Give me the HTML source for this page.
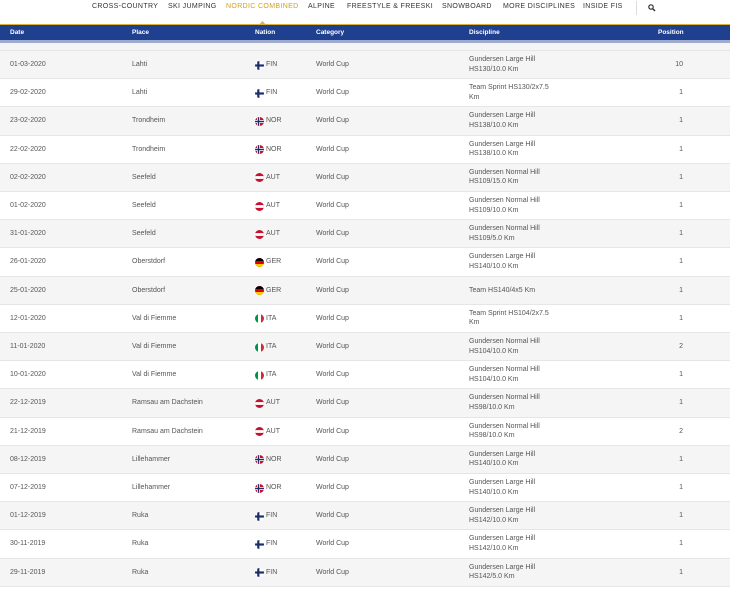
<!DOCTYPE html>
<html><head><meta charset="utf-8"><style>
*{margin:0;padding:0;box-sizing:border-box}
body{width:730px;height:596px;background:#fff;font-family:"Liberation Sans",Arial,sans-serif;position:relative;overflow:hidden;color:#444}
.nav{position:absolute;top:0;left:0;width:730px;height:24px;background:#fff}
.nav span{position:absolute;top:3px;font-size:7px;letter-spacing:0.35px;color:#333;white-space:nowrap}
.gold{position:absolute;top:24px;left:0;width:730px;height:1px;background:#d9b13b}
.blue{position:absolute;top:25px;left:0;width:730px;height:16px;background:#1f3f8f}
.strip{position:absolute;top:40px;left:0;width:730px;height:3px;background:#9eabcf}
.blue span{position:absolute;top:4px;font-size:6.5px;font-weight:bold;color:#fff}
.pre{position:absolute;top:43px;left:0;width:730px;height:8px;background:#f5f5f5;border-bottom:1px solid #e6e6e6}
.row{position:absolute;left:0;width:730px;height:28.2px;border-bottom:1px solid #e6e6e6;font-size:7px;color:#555}
.row.g{background:#f5f5f5}
.row>span{position:absolute;top:10px;white-space:nowrap}
.row .d{top:4px;line-height:9.5px}
.fl{position:absolute;top:9.5px;left:255px;width:9px;height:9px;border-radius:50%;overflow:hidden}
.fl svg{display:block}
.nt{left:266px}
</style></head><body>
<div class="nav">
<span style="left:92px">CROSS-COUNTRY</span>
<span style="left:168px">SKI JUMPING</span>
<span style="left:226px;color:#d4a017">NORDIC COMBINED</span>
<span style="left:308px">ALPINE</span>
<span style="left:347px">FREESTYLE &amp; FREESKI</span>
<span style="left:442px">SNOWBOARD</span>
<span style="left:503px">MORE DISCIPLINES</span>
<span style="left:583px">INSIDE FIS</span>
<div style="position:absolute;left:636px;top:1px;width:1px;height:14px;background:#ddd"></div>
<svg style="position:absolute;left:648px;top:4px" width="8" height="8" viewBox="0 0 8 8"><circle cx="3" cy="3" r="2.2" fill="none" stroke="#333" stroke-width="1.2"/><line x1="4.6" y1="4.6" x2="7" y2="7" stroke="#333" stroke-width="1.4"/></svg>
</div>
<div class="gold"></div>
<svg style="position:absolute;left:259px;top:21px" width="7" height="4"><polygon points="0,4 3.5,0 7,4" fill="#d9b13b"/></svg>
<div class="blue">
<span style="left:10px">Date</span><span style="left:132px">Place</span><span style="left:255px">Nation</span><span style="left:316px">Category</span><span style="left:469px">Discipline</span><span style="left:658px">Position</span>
</div>
<div class="strip"></div>
<div class="pre"></div>
<div id="rows"></div>
<script>
var d=[
["01-03-2020","Lahti","FIN","Gundersen Large Hill<br>HS130/10.0 Km","10"],
["29-02-2020","Lahti","FIN","Team Sprint HS130/2x7.5<br>Km","1"],
["23-02-2020","Trondheim","NOR","Gundersen Large Hill<br>HS138/10.0 Km","1"],
["22-02-2020","Trondheim","NOR","Gundersen Large Hill<br>HS138/10.0 Km","1"],
["02-02-2020","Seefeld","AUT","Gundersen Normal Hill<br>HS109/15.0 Km","1"],
["01-02-2020","Seefeld","AUT","Gundersen Normal Hill<br>HS109/10.0 Km","1"],
["31-01-2020","Seefeld","AUT","Gundersen Normal Hill<br>HS109/5.0 Km","1"],
["26-01-2020","Oberstdorf","GER","Gundersen Large Hill<br>HS140/10.0 Km","1"],
["25-01-2020","Oberstdorf","GER","Team HS140/4x5 Km","1"],
["12-01-2020","Val di Fiemme","ITA","Team Sprint HS104/2x7.5<br>Km","1"],
["11-01-2020","Val di Fiemme","ITA","Gundersen Normal Hill<br>HS104/10.0 Km","2"],
["10-01-2020","Val di Fiemme","ITA","Gundersen Normal Hill<br>HS104/10.0 Km","1"],
["22-12-2019","Ramsau am Dachstein","AUT","Gundersen Normal Hill<br>HS98/10.0 Km","1"],
["21-12-2019","Ramsau am Dachstein","AUT","Gundersen Normal Hill<br>HS98/10.0 Km","2"],
["08-12-2019","Lillehammer","NOR","Gundersen Large Hill<br>HS140/10.0 Km","1"],
["07-12-2019","Lillehammer","NOR","Gundersen Large Hill<br>HS140/10.0 Km","1"],
["01-12-2019","Ruka","FIN","Gundersen Large Hill<br>HS142/10.0 Km","1"],
["30-11-2019","Ruka","FIN","Gundersen Large Hill<br>HS142/10.0 Km","1"],
["29-11-2019","Ruka","FIN","Gundersen Large Hill<br>HS142/5.0 Km","1"]];
var F={
FIN:'<rect width="9" height="9" fill="#fff"/><rect x="0" y="3.4" width="9" height="2.2" fill="#1a2f6b"/><rect x="2.2" y="0" width="2.2" height="9" fill="#1a2f6b"/>',
NOR:'<rect width="9" height="9" fill="#c8102e"/><rect x="0" y="3" width="9" height="3" fill="#fff"/><rect x="2" y="0" width="3" height="9" fill="#fff"/><rect x="0" y="3.8" width="9" height="1.4" fill="#1a2f6b"/><rect x="2.8" y="0" width="1.4" height="9" fill="#1a2f6b"/>',
AUT:'<rect width="9" height="9" fill="#c8102e"/><rect x="0" y="3.1" width="9" height="2.8" fill="#fff"/>',
GER:'<rect width="9" height="9" fill="#d00"/><rect x="0" y="0" width="9" height="3" fill="#000"/><rect x="0" y="6" width="9" height="3" fill="#fc0"/>',
ITA:'<rect width="9" height="9" fill="#fff"/><rect x="0" y="0" width="3" height="9" fill="#009246"/><rect x="6" y="0" width="3" height="9" fill="#ce2b37"/>'};
var h='';
d.forEach(function(r,i){
var t=51+i*28.2;
var disc=r[3].indexOf('<br>')<0?'<span style="left:469px">'+r[3]+'</span>':'<span class="d" style="left:469px">'+r[3]+'</span>';
h+='<div class="row'+(i%2==0?' g':'')+'" style="top:'+t+'px"><span style="left:10px">'+r[0]+'</span><span style="left:132px">'+r[1]+'</span><div class="fl"><svg width="9" height="9" viewBox="0 0 9 9">'+F[r[2]]+'</svg></div><span class="nt">'+r[2]+'</span><span style="left:316px">World Cup</span>'+disc+'<span style="right:47px">'+r[4]+'</span></div>';
});
document.getElementById('rows').innerHTML=h;
</script>
</body></html>
